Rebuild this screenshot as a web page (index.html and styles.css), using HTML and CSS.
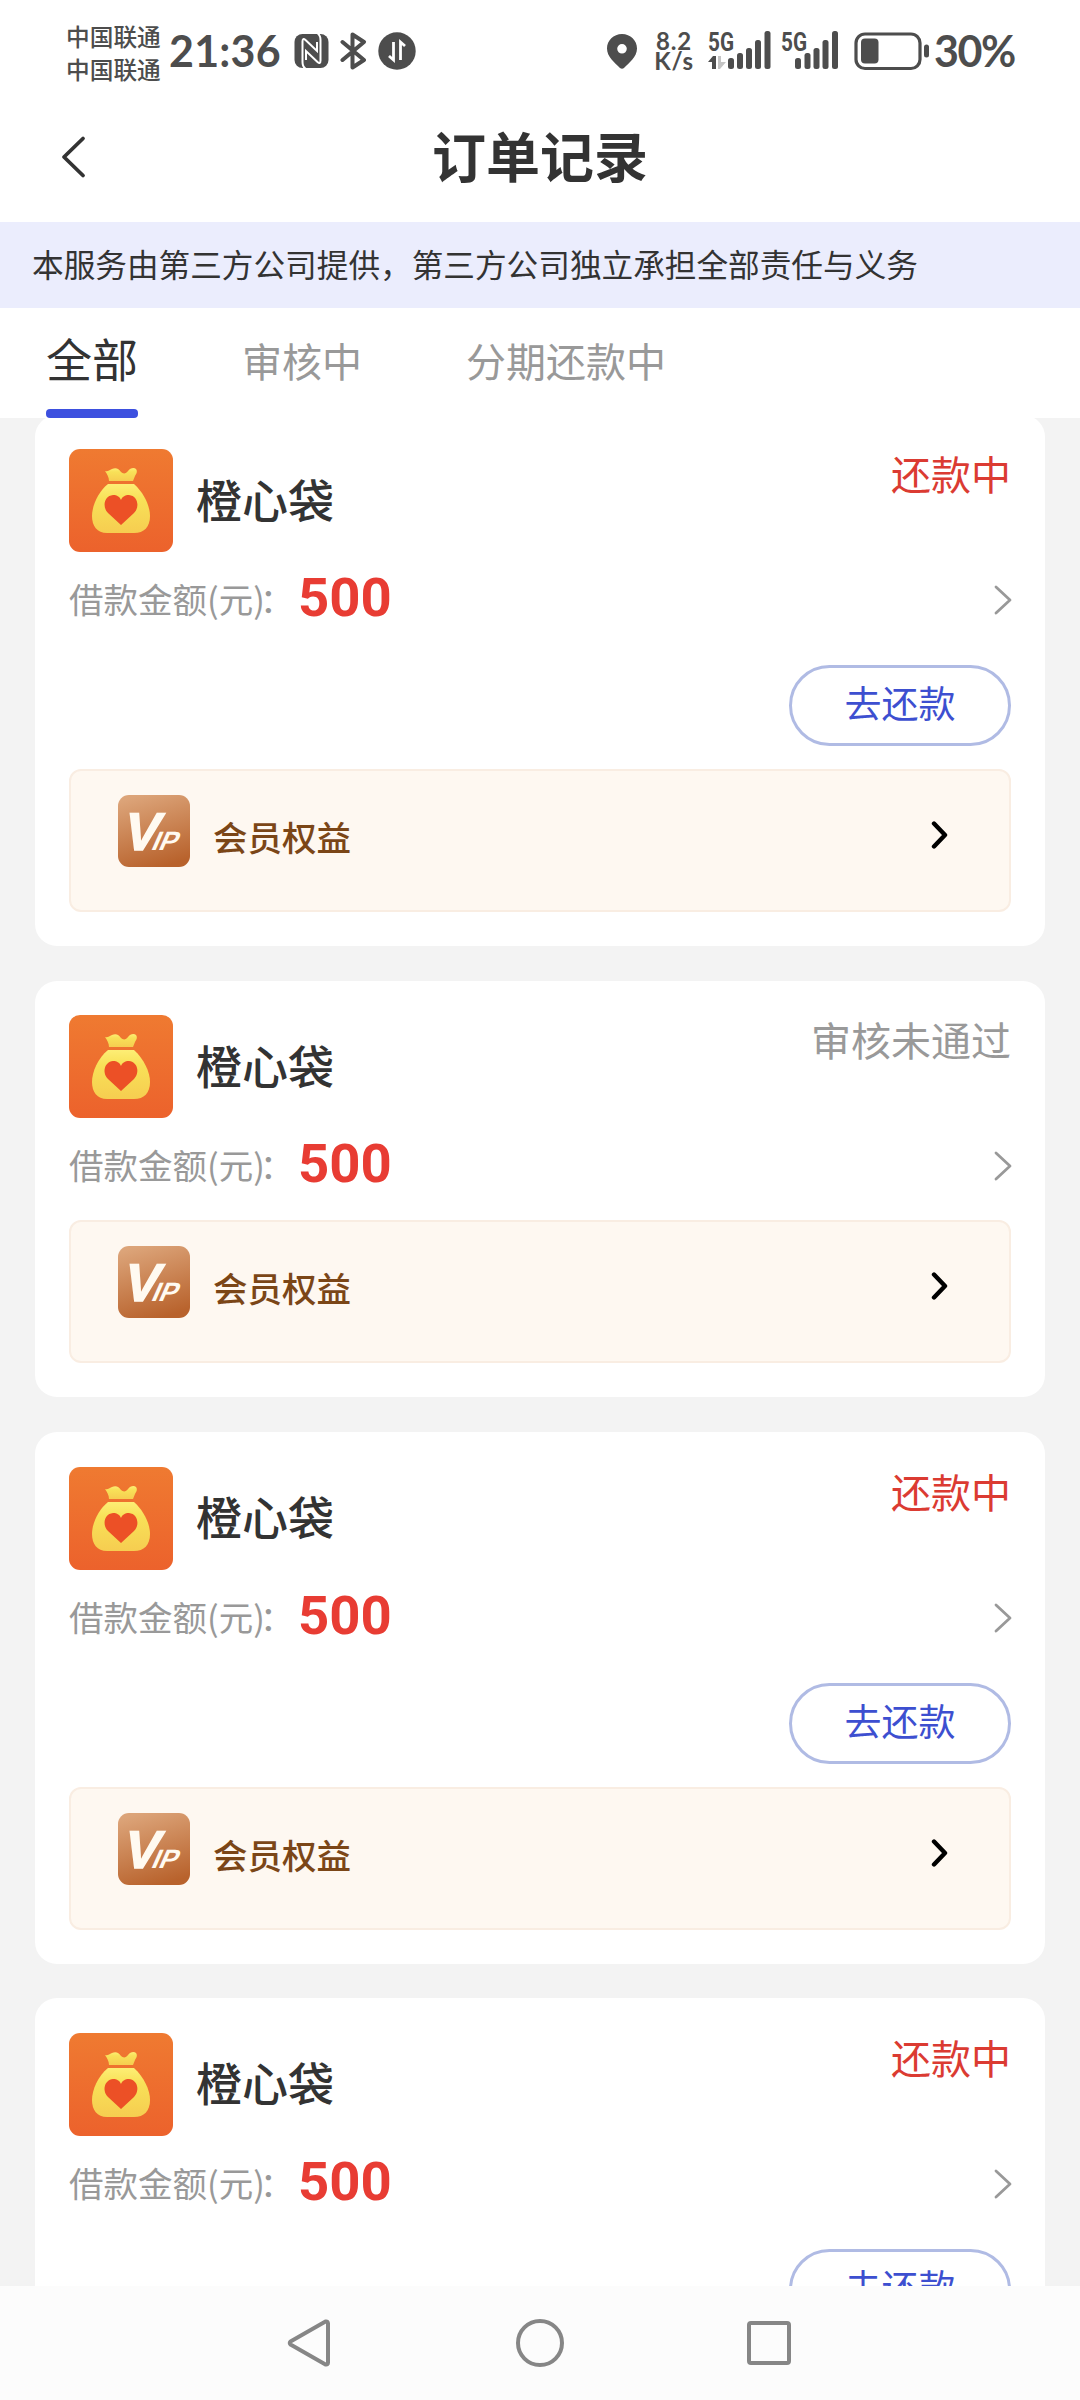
FILE: index.html
```html
<!DOCTYPE html>
<html lang="zh-CN">
<head>
<meta charset="utf-8">
<title>订单记录</title>
<link rel="stylesheet" href="styles.css">
</head>
<body>
<svg class="defs" width="0" height="0" aria-hidden="true">
  <defs>
    <linearGradient id="orange" x1="0" y1="0" x2="0" y2="1"><stop offset="0" stop-color="#ef7a31"/><stop offset="1" stop-color="#ec622c"/></linearGradient>
    <linearGradient id="yellow" x1="0" y1="0" x2="0" y2="1"><stop offset="0" stop-color="#fdee75"/><stop offset=".3" stop-color="#f8e158"/><stop offset="1" stop-color="#f6cd50"/></linearGradient>
    <linearGradient id="bronze" x1=".3" y1="0" x2=".6" y2="1"><stop offset="0" stop-color="#dca479"/><stop offset="1" stop-color="#b8622c"/></linearGradient>
  </defs>
  <symbol id="bag" viewBox="0 0 104 103">
    <rect width="104" height="103" rx="11" fill="url(#orange)"/>
    <path fill="url(#yellow)" d="M36 22C39 23 40 21 43 20C47 18 50 20 52 23C54 25 57 25 59 22C61 19 65 18 67 20C69 23 67 25 66 27L64 32H40C40 28 38 25 36 22Z"/>
    <path fill="url(#yellow)" d="M39 35H65C75 44 81 57 81 67C81 78 75 84 65 84H38C28 84 23 77 23 67C23 57 29 43 39 35Z"/>
    <path fill="#ec5026" d="M52 76L39 64C33 58 35 47 44 46C48 46 51 48 52 51C53 48 56 46 60 46C69 47 71 58 65 64Z"/>
  </symbol>
  <symbol id="more" viewBox="0 0 20 32"><path d="M3 3L17 16L3 29" fill="none" stroke="#999" stroke-width="2.8" stroke-linecap="round" stroke-linejoin="round"/></symbol>
  <symbol id="go" viewBox="0 0 18 30"><path d="M3 3.5L14 15L3 26.500" fill="none" stroke="#000" stroke-width="4.400" stroke-linecap="round" stroke-linejoin="round"/></symbol>
</svg>
<div class="screen">
  <div class="status-bar">
    <div class="carriers"><span>中国联通</span><span>中国联通</span></div>
    <span class="clock">21:36</span>
    <svg class="nfc" width="35" height="36" viewBox="0 0 35 36"><rect x=".5" y="1" width="34" height="34" rx="8" fill="#4d4d4d"/><path d="M12 36Q8.500 34 8.500 29V8.500Q8.500 4.500 11.500 7L23 18V9M23 0Q26.500 2 26.500 7V27.500Q26.500 31.500 23.500 29L12 18V27" fill="none" stroke="#fff" stroke-width="2"/></svg>
    <svg class="bluetooth" width="27" height="38" viewBox="0 0 27 38"><path d="M2.500 10L24 28L12.500 35.500V2.500L24 10L2.500 28" fill="none" stroke="#4d4d4d" stroke-width="4" stroke-linecap="round" stroke-linejoin="round"/></svg>
    <svg class="data" width="38" height="38" viewBox="0 0 38 38"><circle cx="19" cy="19" r="18.700" fill="#4d4d4d"/><path d="M15.500 10V28L11 24M22.500 28V10L27 14" fill="none" stroke="#fff" stroke-width="2.800"/></svg>
    <svg class="pin" width="32" height="37" viewBox="0 0 32 37"><path fill="#4d4d4d" fill-rule="evenodd" d="M16 1C24.500 1 31 7.500 31 15.500C31 24 23 30 18 35Q16 36.500 14 35C9 30 1 24 1 15.500C1 7.500 7.500 1 16 1ZM16 11A4.800 4.800 0 1 0 16 20.600A4.800 4.800 0 1 0 16 11Z"/></svg>
    <div class="speed"><span>8.2</span><span>K/s</span></div>
    <svg class="sim1" width="64" height="40" viewBox="0 0 64 40"><text class="net" x="0" y="19.500" textLength="26" lengthAdjust="spacingAndGlyphs">5G</text><g fill="#4d4d4d"><path d="M0 31L5 25H8V38H4V31Z"/><rect x="20" y="27" width="6" height="11" rx="2.500"/><rect x="29" y="22" width="6" height="16" rx="2.500"/><rect x="38" y="17" width="6" height="21" rx="2.500"/><rect x="47" y="9" width="6" height="29" rx="2.500"/><rect x="56.500" y="0" width="6" height="38" rx="2.500"/></g><path fill="#c4c4c4" d="M10 25H13V31H18L12 38H10Z"/></svg>
    <svg class="sim2" width="58" height="40" viewBox="0 0 58 40"><text class="net" x="0" y="19.500" textLength="26" lengthAdjust="spacingAndGlyphs">5G</text><g fill="#4d4d4d"><rect x="14" y="27" width="6" height="11" rx="2.500"/><rect x="23.500" y="22" width="6" height="16" rx="2.500"/><rect x="32.500" y="17" width="6" height="21" rx="2.500"/><rect x="41.500" y="9" width="6" height="29" rx="2.500"/><rect x="51" y="0" width="6" height="38" rx="2.500"/></g></svg>
    <svg class="battery" width="77" height="39" viewBox="0 0 77 39"><rect x="2" y="2" width="64" height="34.500" rx="9" fill="none" stroke="#4d4d4d" stroke-width="3.200"/><rect x="7" y="6.500" width="17.500" height="25" rx="4" fill="#4d4d4d"/><rect x="70" y="12.500" width="5" height="13" rx="2.500" fill="#4d4d4d"/></svg>
    <span class="percent">30%</span>
  </div>
  <header class="header">
    <svg class="back" width="30" height="46" viewBox="0 0 30 46"><path d="M24 4.500L5 23L24 41.500" fill="none" stroke="#333" stroke-width="3.800" stroke-linecap="round" stroke-linejoin="round"/></svg>
    <h1>订单记录</h1>
  </header>
  <p class="notice">本服务由第三方公司提供，第三方公司独立承担全部责任与义务</p>
  <nav class="tabs">
    <a class="tab active">全部</a>
    <a class="tab">审核中</a>
    <a class="tab">分期还款中</a>
  </nav>
  <main class="orders">
    <article class="card">
      <div class="head"><svg class="logo"><use href="#bag"/></svg><h2>橙心袋</h2><span class="state due">还款中</span></div>
      <div class="amount"><span class="label">借款金额(元)<i>：</i></span><strong>500</strong><svg class="more"><use href="#more"/></svg></div>
      <div class="actions"><button>去还款</button></div>
      <div class="benefit"><svg class="badge" viewBox="0 0 72 72"><rect width="72" height="72" rx="11" fill="url(#bronze)"/><text class="vip-v" transform="translate(3 54.500) skewX(-14)">V</text><text class="vip-ip" transform="translate(32 55) skewX(-24)">IP</text></svg><span>会员权益</span><svg class="go"><use href="#go"/></svg></div>
    </article>
    <article class="card">
      <div class="head"><svg class="logo"><use href="#bag"/></svg><h2>橙心袋</h2><span class="state">审核未通过</span></div>
      <div class="amount"><span class="label">借款金额(元)<i>：</i></span><strong>500</strong><svg class="more"><use href="#more"/></svg></div>
      <div class="benefit"><svg class="badge" viewBox="0 0 72 72"><rect width="72" height="72" rx="11" fill="url(#bronze)"/><text class="vip-v" transform="translate(3 54.500) skewX(-14)">V</text><text class="vip-ip" transform="translate(32 55) skewX(-24)">IP</text></svg><span>会员权益</span><svg class="go"><use href="#go"/></svg></div>
    </article>
    <article class="card">
      <div class="head"><svg class="logo"><use href="#bag"/></svg><h2>橙心袋</h2><span class="state due">还款中</span></div>
      <div class="amount"><span class="label">借款金额(元)<i>：</i></span><strong>500</strong><svg class="more"><use href="#more"/></svg></div>
      <div class="actions"><button>去还款</button></div>
      <div class="benefit"><svg class="badge" viewBox="0 0 72 72"><rect width="72" height="72" rx="11" fill="url(#bronze)"/><text class="vip-v" transform="translate(3 54.500) skewX(-14)">V</text><text class="vip-ip" transform="translate(32 55) skewX(-24)">IP</text></svg><span>会员权益</span><svg class="go"><use href="#go"/></svg></div>
    </article>
    <article class="card">
      <div class="head"><svg class="logo"><use href="#bag"/></svg><h2>橙心袋</h2><span class="state due">还款中</span></div>
      <div class="amount"><span class="label">借款金额(元)<i>：</i></span><strong>500</strong><svg class="more"><use href="#more"/></svg></div>
      <div class="actions"><button>去还款</button></div>
    </article>
  </main>
  <footer class="system-nav">
    <svg width="50" height="50" viewBox="0 0 50 50"><path d="M4.500 23.500Q3 25 4.500 26.500L39.500 46.500Q42 47 42 44.500V5.500Q42 3 39.500 3.500Z"/></svg>
    <svg width="50" height="50" viewBox="0 0 50 50"><circle cx="25" cy="25" r="22"/></svg>
    <svg width="50" height="50" viewBox="0 0 50 50"><rect x="5" y="5" width="40" height="40" rx="2"/></svg>
  </footer>
</div>
</body>
</html>
```
FILE: styles.css
```css
* { box-sizing: border-box; }
body { margin: 0; background: #fff; font-family: "Noto Sans CJK SC", sans-serif; color: #333; }
svg { flex: none; display: block; }
.defs { position: absolute; }
.screen { width: 1080px; height: 2400px; display: flex; flex-direction: column; overflow: hidden; }

.status-bar { flex: none; height: 92px; padding: 10px 66px 0 66px; display: flex; align-items: center; color: #4d4d4d; }
.carriers { display: flex; flex-direction: column; width: 103px; font-size: 23.700px; font-weight: 500; line-height: 33px; white-space: nowrap; padding-top: 4px; }
.clock { width: 125px; font: bold 43px/50px Lato, sans-serif; letter-spacing: .2px; }
.nfc { margin-right: 11px; }
.bluetooth { margin-right: 11px; }
.pin { margin-left: auto; }
.speed { display: flex; flex-direction: column; align-items: center; width: 40px; margin: 0 14px 0 16px; font: bold 24px/20px Lato, sans-serif; letter-spacing: .8px; white-space: nowrap; }
.sim1 { margin-right: 9px; }
.sim2 { margin-right: 15px; overflow: visible; }
.net { font: bold 25px Roboto, sans-serif; fill: #4d4d4d; }
.percent { width: 80px; margin-left: 3px; font: bold 43px/50px Lato, sans-serif; letter-spacing: -1.500px; white-space: nowrap; }

.header { flex: none; height: 130px; display: grid; grid-template-columns: 1fr auto 1fr; align-items: center; padding: 0 59px; }
h1 { margin: 0; padding-bottom: 5px; font-size: 54px; line-height: 70px; font-weight: 700; }
.notice { flex: none; height: 86px; margin: 0; padding: 0 32px; background: #ebedfd; font-size: 31.650px; line-height: 83px; white-space: nowrap; }
.tabs { flex: none; height: 110px; padding: 0 46px; display: flex; gap: 104px; }
.tab { height: 110px; font-size: 40px; line-height: 104px; color: #999; }
.tab.active { font-size: 46px; line-height: 98px; color: #333; }
.tab.active::after { content: ""; display: block; height: 9px; margin-top: 3px; border-radius: 4px; background: #3d50df; }

.orders { flex: 1; min-height: 0; overflow: hidden; background: #f3f3f3; padding: 0 35px; }
.card { background: #fff; border-radius: 22px; padding: 34.500px 34px 34px; margin-bottom: 34.750px; }
.card:first-child { margin-top: -3.500px; }
.head { display: flex; height: 103px; align-items: center; gap: 23px; }
.logo { width: 104px; height: 103px; }
h2 { margin: 0; padding-bottom: 6px; font-size: 46px; line-height: 60px; font-weight: 500; }
.state { margin-left: auto; align-self: flex-start; font-size: 40px; line-height: 48px; color: #999; }
.state.due { color: #db3b32; }
.amount { display: flex; height: 78px; margin-top: 9px; align-items: center; }
.label { width: 229px; padding-bottom: 4px; font-size: 34.500px; color: #999; white-space: nowrap; }
.label i { font-style: normal; margin-left: -5px; }
.amount strong { padding-bottom: 6px; font: bold 54.500px/60px Roboto, sans-serif; color: #e83c33; }
.more { width: 20px; height: 32px; margin: 0 -2px 0 auto; }
.actions { display: flex; justify-content: flex-end; padding: 26px 0 8px; }
button { width: 222px; height: 81px; padding: 0 0 7px; border: 3px solid #b0bbe4; border-radius: 41px; background: #fff; color: #3d4fd0; font: 37px/50px "Noto Sans CJK SC", sans-serif; }
.benefit { display: flex; align-items: flex-start; height: 143px; margin-top: 15px; padding: 24px 60px 0 47px; background: #fef8f1; border: 2px solid #f9ede2; border-radius: 12px; font-size: 34.500px; font-weight: 500; line-height: 50px; color: #7b4617; }
.badge { width: 72px; height: 72px; }
.benefit span { margin: 16px 0 0 23px; }
.go { width: 18px; height: 30px; margin: 25px 0 0 auto; }
.vip-v { font: bold 53px "Liberation Sans", sans-serif; fill: #fffaf1; stroke: #fffaf1; stroke-width: 1.500px; }
.vip-ip { font: bold 26.500px "Liberation Sans", sans-serif; fill: #fffaf1; }

.system-nav { flex: none; height: 114px; background: #fcfcfc; display: flex; justify-content: center; align-items: center; gap: 179px; }
.system-nav svg { fill: none; stroke: #868686; stroke-width: 4; stroke-linejoin: round; }
```
